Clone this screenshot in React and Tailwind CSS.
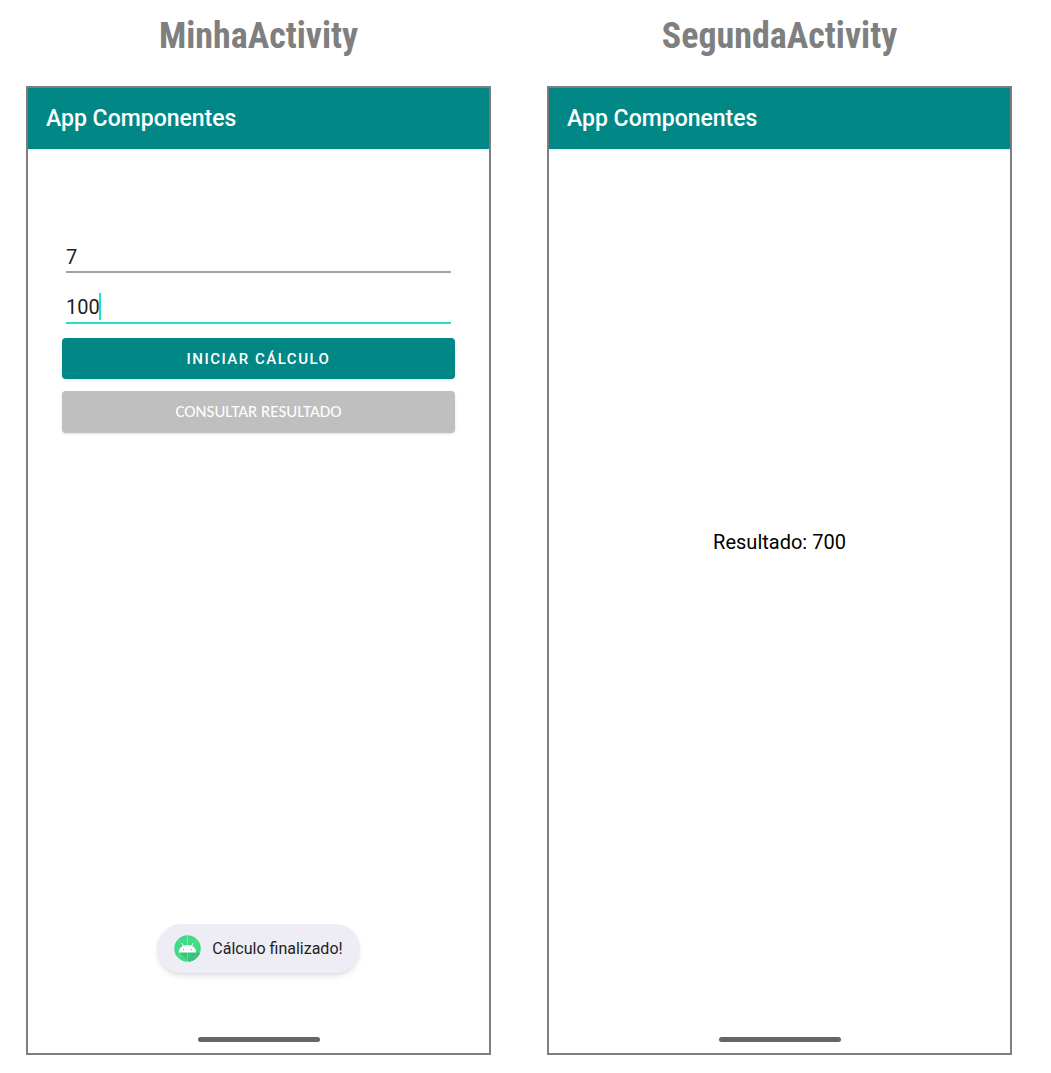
import { useState } from "react";

function AndroidIcon() {
  return (
    <svg viewBox="0 0 54 54" className="h-[27px] w-[27px] shrink-0" aria-hidden="true">
      <defs>
        <clipPath id="launcher-disc">
          <circle cx="27" cy="27" r="26.5" />
        </clipPath>
      </defs>
      <g clipPath="url(#launcher-disc)">
        <rect width="54" height="54" fill="#3ddc84" />
        <path d="M10 33 L32 56 L58 56 L58 44 L44 30 Z" fill="#36c279" />
        <path d="M11 0V54M43 0V54M0 11H54M0 43H54" stroke="#ffffff" strokeOpacity="0.12" strokeWidth="1" />
        <path d="M27 0V54" stroke="#ffffff" strokeOpacity="0.5" strokeWidth="1.2" />
      </g>
      <path d="M16 17L19.5 23M38 17L34.5 23" stroke="#fff" strokeWidth="2" strokeLinecap="round" />
      <path d="M9 35C10 26 17 20 27 20S44 26 45 35Z" fill="#fff" />
      <circle cx="19" cy="29" r="1.5" fill="#3ddc84" />
      <circle cx="35" cy="29" r="1.5" fill="#3ddc84" />
    </svg>
  );
}

function Phone({ title, children }) {
  return (
    <section className="flex flex-col">
      <h2 className="h-[86px] pt-4 text-center font-['Roboto_Condensed','Roboto',sans-serif] text-[36px] leading-10 font-bold text-[#7f7f7f]">
        {title}
      </h2>
      <div className="flex flex-1 flex-col border-2 border-[#7f7f7f]">
        <header className="flex h-[61px] items-center bg-[#018786] px-[18px] shadow-sm">
          <h1 className="text-[23px] leading-8 font-medium text-white">App Componentes</h1>
        </header>
        {children}
        <div className="mx-auto mb-[11px] h-[5px] w-[122px] rounded-full bg-[#666666]" />
      </div>
    </section>
  );
}

export default function App() {
  const [first, setFirst] = useState("7");
  const [second, setSecond] = useState("100");

  return (
    <main className="grid min-h-screen grid-cols-2 gap-14 bg-white pr-[39px] pb-[18px] pl-[26px] font-['Roboto',sans-serif]">
      <Phone title="MinhaActivity">
        <form className="flex flex-1 flex-col px-[34px] pt-[93px]" onSubmit={(e) => e.preventDefault()}>
          <input
            aria-label="Primeiro valor"
            value={first}
            onChange={(e) => setFirst(e.target.value)}
            className="mx-1 h-[31px] border-b-2 border-[#a3a3a3] text-[20px] leading-7 text-[#212121] outline-none"
          />
          <div className="relative mx-1 mt-5 flex h-[31px] items-start border-b-2 border-[#2adcc8]">
            <input
              aria-label="Segundo valor"
              value={second}
              onChange={(e) => setSecond(e.target.value)}
              className="h-7 w-full text-[20px] leading-7 text-[#212121] outline-none"
            />
            <span className="absolute top-0 left-[33px] h-[27px] w-[2px] bg-[#2adcc8]" />
          </div>
          <button
            type="submit"
            className="mt-[14px] h-[41px] rounded bg-[#018786] text-[15px] leading-6 font-medium tracking-widest text-white shadow-sm"
          >
            INICIAR CÁLCULO
          </button>
          <button
            type="button"
            className="mt-3 h-[42px] rounded bg-[#bfbfbf] font-['Carlito','Open_Sans',sans-serif] text-[17px] leading-6 text-white shadow-sm"
          >
            CONSULTAR RESULTADO
          </button>
          <div
            role="status"
            className="mx-auto mt-auto mb-16 flex h-[49px] items-center gap-[11px] rounded-full bg-[#eeecf4] px-[17px] text-base text-[#1f1f24] shadow-md"
          >
            <AndroidIcon />
            Cálculo finalizado!
          </div>
        </form>
      </Phone>
      <Phone title="SegundaActivity">
        <div className="flex flex-1 items-center justify-center pb-[102px]">
          <p className="text-[20px] leading-7 text-black">Resultado: 700</p>
        </div>
      </Phone>
    </main>
  );
}
